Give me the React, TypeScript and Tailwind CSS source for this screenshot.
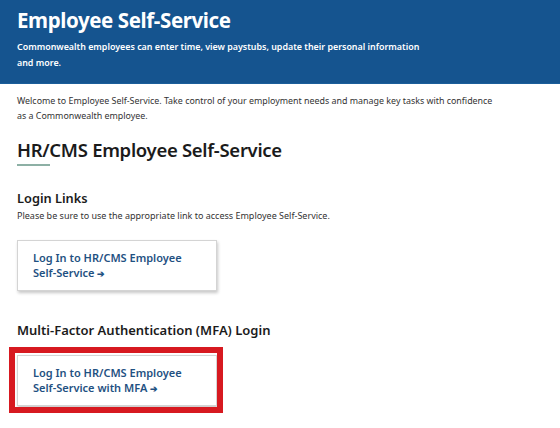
import React from "react";

function Card({ lines, mfa }: { lines: string[]; mfa?: boolean }) {
  return (
    <div className="relative w-[200px]">
      {mfa && (
        <div className="absolute left-[-8px] top-[-8px] right-[-6px] bottom-[-7px] border-[6px] border-[#d71920]" />
      )}
      <div className="h-[51px] border border-[#d4d4d4] bg-white shadow-[1px_2px_3px_rgba(0,0,0,0.22)] pl-[15px] pt-[9px]">
        <div className="text-[11px] leading-[15px] font-semibold text-[#1f5182]">
          <div>{lines[0]}</div>
          <div>
            {lines[1]} <span className="text-[8.5px]">➔</span>
          </div>
        </div>
      </div>
    </div>
  );
}

export default function App() {
  return (
    <div className="w-[560px] h-[428px] bg-white overflow-hidden" style={{ fontFamily: '"Noto Sans", "Open Sans", sans-serif' }}>
      <div className="h-[84px] bg-[#15548f] px-[17px] pt-[5px] border-b border-[#1b5e9a]">
        <h1 className="text-[20.5px] leading-[30px] font-bold text-white tracking-[-0.4px]">Employee Self-Service</h1>
        <p className="mt-[4px] text-[8.9px] leading-[16px] font-semibold text-white w-[408px]">
          Commonwealth employees can enter time, view paystubs, update their personal information and more.
        </p>
      </div>
      <div className="px-[17px]">
        <p className="mt-[9px] text-[8.9px] leading-[15px] text-[#333] w-[479px]">
          Welcome to Employee Self-Service. Take control of your employment needs and manage key tasks with confidence as a Commonwealth employee.
        </p>
        <h2 className="mt-[15px] text-[18.5px] leading-[24px] font-semibold text-[#1b1b1b] tracking-[-0.3px]">HR/CMS Employee Self-Service</h2>
        <div className="mt-[2px] w-[33px] h-[2px] bg-[#8db0a5]" />
        <h3 className="mt-[23px] text-[12.8px] leading-[18px] font-semibold text-[#1b1b1b]">Login Links</h3>
        <p className="mt-[2px] text-[9px] leading-[14px] text-[#333]">
          Please be sure to use the appropriate link to access Employee Self-Service.
        </p>
        <div className="mt-[17px]">
          <Card lines={["Log In to HR/CMS Employee", "Self-Service"]} />
        </div>
        <h3 className="mt-[30px] text-[13px] leading-[18px] font-semibold text-[#1b1b1b]">
          Multi-Factor Authentication (MFA) Login
        </h3>
        <div className="mt-[16px]">
          <Card lines={["Log In to HR/CMS Employee", "Self-Service with MFA"]} mfa />
        </div>
      </div>
    </div>
  );
}
